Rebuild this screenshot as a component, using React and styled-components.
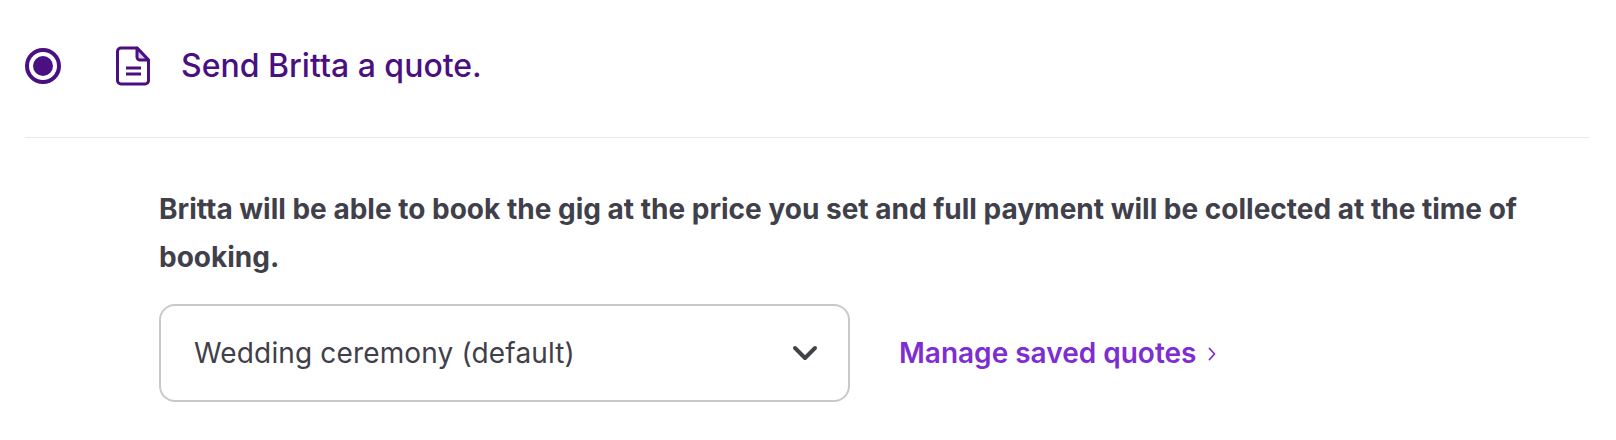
import React from 'react';
import styled, { createGlobalStyle } from 'styled-components';

const Global = createGlobalStyle`
  html, body { margin: 0; padding: 0; background: #fff; }
  body { font-family: Inter, "Liberation Sans", sans-serif; -webkit-font-smoothing: antialiased; }
`;
const Page = styled.div`
  width: 1616px; height: 440px; box-sizing: border-box; padding: 0 27px 0 25px; overflow: hidden;
`;
const Header = styled.div`
  height: 138px; box-sizing: border-box; border-bottom: 1px solid #e9e9e9;
  display: flex; align-items: center; padding-bottom: 5px;
`;
const Radio = styled.span`
  width: 36px; height: 36px; box-sizing: border-box; border: 4px solid #4a0f80; border-radius: 50%;
  display: flex; align-items: center; justify-content: center; flex: none;
  &::after { content: ''; width: 20px; height: 20px; border-radius: 50%; background: #4a0f80; }
`;
const DocIcon = styled.svg`
  width: 34px; height: 40px; margin-left: 55px; flex: none;
`;
const Title = styled.div`
  margin-left: 31px; font-size: 32px; line-height: 40px; font-weight: 500; color: #4a0f80;
`;
const Body = styled.div`
  padding: 47px 0 0 134px;
`;
const Lead = styled.p`
  margin: 0; font-size: 28px; line-height: 48px; font-weight: 700; color: #40404a; max-width: 1400px;
`;
const Row = styled.div`
  display: flex; align-items: center; margin-top: 23px;
`;
const Select = styled.div`
  width: 691px; height: 98px; box-sizing: border-box; border: 2px solid #c8c9cb; border-radius: 16px;
  display: flex; align-items: center; justify-content: space-between; padding: 0 30px 0 33px;
  font-size: 28px; color: #40404a; background: #fff; letter-spacing: 0.15px;
`;
const Chevron = styled.svg`
  width: 26px; height: 16px; flex: none;
`;
const Manage = styled.a`
  margin-left: 49px; font-size: 28px; font-weight: 600; color: #7e2dd1; display: flex; align-items: center;
  text-decoration: none;
`;
const Small = styled.svg`
  width: 10px; height: 16px; margin-left: 11px; margin-top: 2px;
`;

export default function App() {
  return (
    <Page>
      <Global />
      <Header>
        <Radio />
        <DocIcon viewBox="0 0 34 40" fill="none">
          <path d="M21 2H5a3.5 3.5 0 0 0-3.5 3.5v29A3.5 3.5 0 0 0 5 38h24a3.5 3.5 0 0 0 3.500-3.500V14L21 2Z" stroke="#4a0f80" strokeWidth="3" strokeLinejoin="round" />
          <path d="M21 2v9a3 3 0 0 0 3 3h8.500L21 2Z" fill="#d9cfe6" stroke="#4a0f80" strokeWidth="3" strokeLinejoin="round" />
          <path d="M10 22h15M10 28h15" stroke="#4a0f80" strokeWidth="3" />
        </DocIcon>
        <Title>Send Britta a quote.</Title>
      </Header>
      <Body>
        <Lead>Britta will be able to book the gig at the price you set and full payment will be collected at the time of booking.</Lead>
        <Row>
          <Select>
            Wedding ceremony (default)
            <Chevron viewBox="0 0 26 16" fill="none">
              <path d="M3 3l10 10L23 3" stroke="#3f4448" strokeWidth="4" strokeLinecap="round" strokeLinejoin="round" />
            </Chevron>
          </Select>
          <Manage href="#">
            Manage saved quotes
            <Small viewBox="0 0 10 16" fill="none">
              <path d="M2.500 2.500l5 5.500-5 5.500" stroke="#7e2dd1" strokeWidth="1.8" strokeLinecap="round" strokeLinejoin="round" />
            </Small>
          </Manage>
        </Row>
      </Body>
    </Page>
  );
}
